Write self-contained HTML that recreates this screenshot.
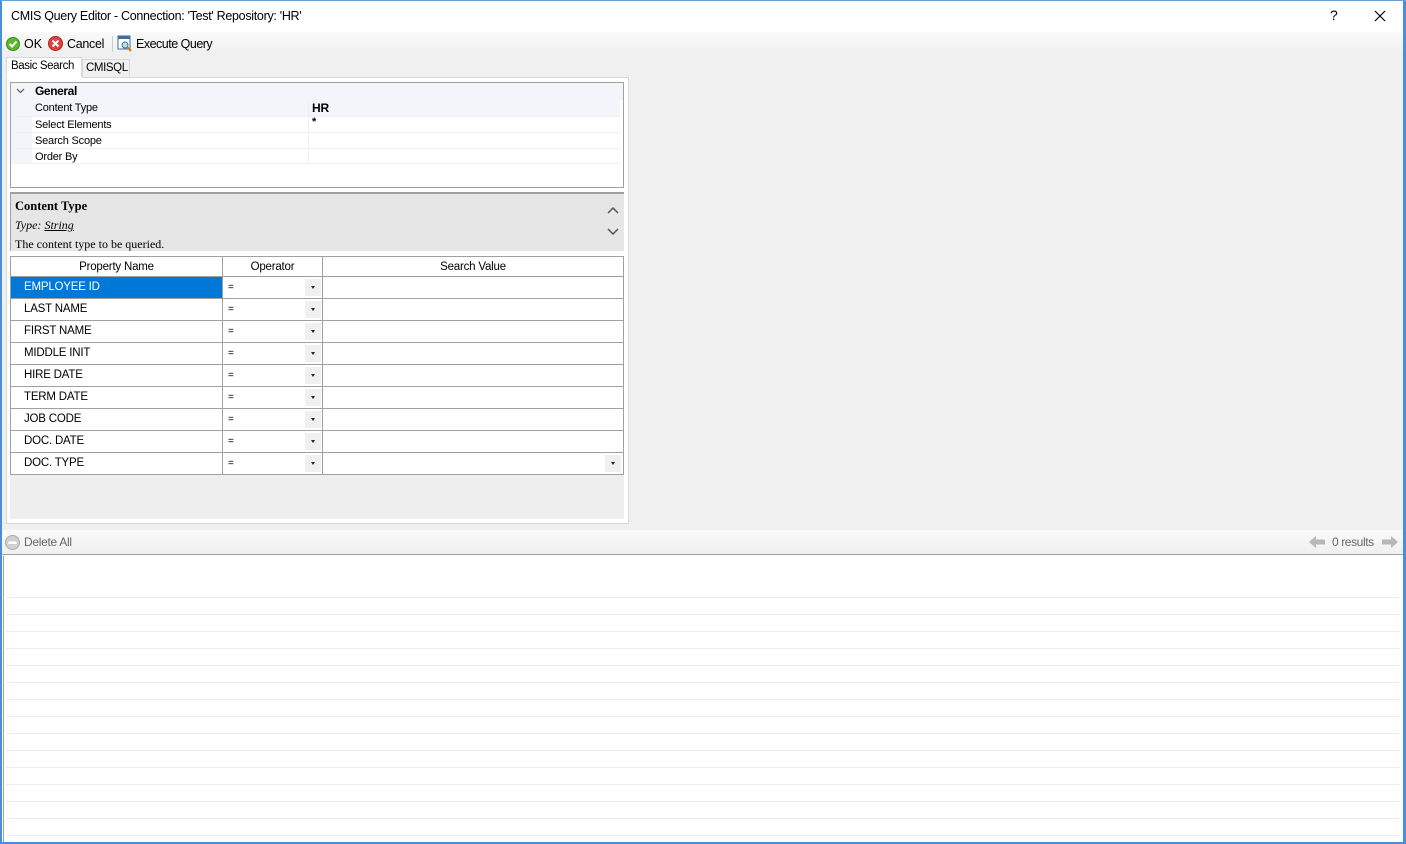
<!DOCTYPE html>
<html><head><style>
*{box-sizing:border-box;margin:0;padding:0}
body{width:1406px;height:844px;overflow:hidden;background:#fff;font-family:"Liberation Sans",sans-serif;font-size:12px;color:#000;position:relative}
.a{position:absolute}
.row{position:absolute;left:11px;width:613px;height:22px;border-bottom:1px solid #a0a0a0;font-size:11.5px;letter-spacing:-0.2px}
.row div{position:absolute;top:0;height:21px;line-height:21px}
.c1{left:0;width:212px;padding-left:13px;border-right:1px solid #a0a0a0}
.c2{left:212px;width:100px;padding-left:5px;border-right:1px solid #a0a0a0;font-size:10px}
.dd{position:absolute;width:16px;height:17px!important;top:2px!important;background:#f0f0f0}
.dd:after{content:"";position:absolute;left:6px;top:7px;border-left:2.5px solid transparent;border-right:2.5px solid transparent;border-top:3px solid #222}
.pg{position:absolute;left:14px;width:606px;height:16px;line-height:16px;font-size:11px;letter-spacing:-0.2px}
.pg span{position:absolute;left:21px}
.hl{position:absolute;left:6px;width:1394px;height:1px;background:#ececec}
</style></head><body>
<div class="a" style="left:0;top:0;width:2px;height:844px;background:#4a8fd6"></div>
<div class="a" style="left:1403px;top:0;width:3px;height:844px;background:#4a8fd6"></div>
<div class="a" style="left:0;top:842px;width:1406px;height:2px;background:#4a8fd6"></div>
<div class="a" style="left:0;top:0;width:1406px;height:1px;background:#6aa0d8"></div>
<div class="a" style="left:11px;top:9px;font-size:12.5px;letter-spacing:-0.3px">CMIS Query Editor - Connection: 'Test' Repository: 'HR'</div>
<div class="a" style="left:1330px;top:7px;font-size:14px">?</div>
<svg class="a" style="left:1374px;top:10px" width="12" height="12"><path d="M1 1L11 11M11 1L1 11" stroke="#000" stroke-width="1.2"/></svg>
<div class="a" style="left:2px;top:32px;width:1401px;height:24px;background:linear-gradient(#fafafa,#eeeeee)"></div>
<div class="a" style="left:2px;top:55px;width:1401px;height:475px;background:#f0f0f0"></div>
<svg class="a" style="left:6px;top:37px" width="14" height="14"><circle cx="7" cy="7" r="6.5" fill="#5cb82e" stroke="#3a8a1a"/><path d="M3.5 7l2.5 2.5 4.5-5" stroke="#fff" stroke-width="2" fill="none"/></svg>
<div class="a" style="left:24px;top:37px;font-size:12.5px">OK</div>
<svg class="a" style="left:48px;top:36px" width="15" height="15"><circle cx="7.5" cy="7.5" r="7" fill="#e04040" stroke="#b02020"/><path d="M4.5 4.5l6 6M10.5 4.5l-6 6" stroke="#fff" stroke-width="2"/></svg>
<div class="a" style="left:67px;top:37px;font-size:12.5px;letter-spacing:-0.3px">Cancel</div>
<div class="a" style="left:112px;top:36px;width:1px;height:16px;background:#ccc"></div>
<svg class="a" style="left:117px;top:35px" width="16" height="17"><rect x="1" y="1" width="12" height="13" fill="#fff" stroke="#3b6ea5"/><rect x="1" y="1" width="12" height="3" fill="#3b6ea5"/><circle cx="8" cy="10" r="3" fill="#bde" stroke="#3b6ea5"/><path d="M10 12l4 4" stroke="#c08020" stroke-width="2"/></svg>
<div class="a" style="left:136px;top:37px;font-size:12.5px;letter-spacing:-0.5px">Execute Query</div>
<div class="a" style="left:6px;top:57px;width:76px;height:21px;background:#fff;border:1px solid #d9d9d9;border-bottom:none"></div>
<div class="a" style="left:11px;top:60px;font-size:11.5px;letter-spacing:-0.4px">Basic Search</div>
<div class="a" style="left:82px;top:59px;width:48px;height:18px;background:#f0f0f0;border:1px solid #d9d9d9;border-bottom:none"></div>
<div class="a" style="left:86px;top:62px;font-size:11.5px;letter-spacing:-0.4px">CMISQL</div>
<div class="a" style="left:6px;top:77px;width:623px;height:447px;background:#fff;border:1px solid #d9d9d9;border-top:none"></div>
<div class="a" style="left:6px;top:77px;width:623px;height:1px;background:#d9d9d9"></div>
<div class="a" style="left:6px;top:77px;width:76px;height:1px;background:#fff"></div>
<div class="a" style="left:10px;top:82px;width:614px;height:106px;border:1px solid #a0a0a0;background:#fff"></div>
<div class="a" style="left:11px;top:83px;width:612px;height:17px;background:#f2f6fb"></div>
<div class="a" style="left:11px;top:83px;width:21px;height:81px;background:#f2f6fb"></div>
<svg class="a" style="left:16px;top:88px" width="9" height="6"><path d="M1 1l3.5 3.5L8 1" stroke="#555" fill="none" stroke-width="1.2"/></svg>
<div class="a" style="left:35px;top:84px;font-weight:bold;font-size:12px;letter-spacing:-0.4px">General</div>
<div class="pg" style="top:100px;background:#f2f6fb"><span>Content Type</span><b style="position:absolute;left:298px;font-size:12px">HR</b></div>
<div class="pg" style="top:116px;border-top:1px solid #f0f0f0"><span>Select Elements</span><b style="position:absolute;left:298px;top:-3px">*</b></div>
<div class="pg" style="top:132px;border-top:1px solid #f0f0f0"><span>Search Scope</span></div>
<div class="pg" style="top:148px;border-top:1px solid #f0f0f0;border-bottom:1px solid #f0f0f0"><span>Order By</span></div>
<div class="a" style="left:308px;top:100px;width:1px;height:64px;background:#f0f0f0"></div>
<div class="a" style="left:10px;top:192px;width:614px;height:59px;background:#e6e6e6;border-top:2px solid #a0a0a0;border-left:1px solid #a0a0a0"></div>
<div class="a" style="left:15px;top:199px;font-family:'Liberation Serif',serif;font-weight:bold;font-size:12.5px">Content Type</div>
<div class="a" style="left:15px;top:218px;font-family:'Liberation Serif',serif;font-style:italic;font-size:12px">Type: <u>String</u></div>
<div class="a" style="left:15px;top:237px;font-family:'Liberation Serif',serif;font-size:12px">The content type to be queried.</div>
<svg class="a" style="left:606px;top:204px" width="14" height="34"><path d="M2 9l5-5 5 5M2 25l5 5 5-5" stroke="#555" stroke-width="1.5" fill="none"/></svg>
<div class="a" style="left:10px;top:256px;width:614px;height:263px;background:#eeeeee"></div>
<div class="a" style="left:10px;top:256px;width:614px;height:219px;border:1px solid #a0a0a0;background:#fff"></div>
<div class="row" style="top:257px;height:20px;text-align:center"><div style="left:0;width:212px;border-right:1px solid #a0a0a0;line-height:20px">Property Name</div><div style="left:212px;width:100px;border-right:1px solid #a0a0a0;line-height:20px">Operator</div><div style="left:312px;width:300px;line-height:20px">Search Value</div></div>
<div class="row" style="top:277px"><div class="c1" style="background:#0078d7;color:#fff">EMPLOYEE ID</div><div class="c2">=</div><div class="dd" style="left:294px"></div></div>
<div class="row" style="top:299px"><div class="c1">LAST NAME</div><div class="c2">=</div><div class="dd" style="left:294px"></div></div>
<div class="row" style="top:321px"><div class="c1">FIRST NAME</div><div class="c2">=</div><div class="dd" style="left:294px"></div></div>
<div class="row" style="top:343px"><div class="c1">MIDDLE INIT</div><div class="c2">=</div><div class="dd" style="left:294px"></div></div>
<div class="row" style="top:365px"><div class="c1">HIRE DATE</div><div class="c2">=</div><div class="dd" style="left:294px"></div></div>
<div class="row" style="top:387px"><div class="c1">TERM DATE</div><div class="c2">=</div><div class="dd" style="left:294px"></div></div>
<div class="row" style="top:409px"><div class="c1">JOB CODE</div><div class="c2">=</div><div class="dd" style="left:294px"></div></div>
<div class="row" style="top:431px"><div class="c1">DOC. DATE</div><div class="c2">=</div><div class="dd" style="left:294px"></div></div>
<div class="row" style="top:453px;border-bottom:none"><div class="c1">DOC. TYPE</div><div class="c2">=</div><div class="dd" style="left:294px"></div><div class="dd" style="left:594px"></div></div>
<div class="a" style="left:2px;top:530px;width:1401px;height:25px;background:linear-gradient(#fafafa,#f0f0f0);border-bottom:1px solid #a0a0a0"></div>
<svg class="a" style="left:5px;top:535px" width="15" height="15"><circle cx="7.5" cy="7.5" r="7" fill="#d0d0d0" stroke="#aaa"/><rect x="3.5" y="6.5" width="8" height="2.5" fill="#fff"/></svg>
<div class="a" style="left:24px;top:535px;color:#666;font-size:12px;letter-spacing:-0.3px">Delete All</div>
<svg class="a" style="left:1308px;top:535px" width="18" height="14"><path d="M1 7l7-6v3.5h9v5H8V13z" fill="#b8b8b8"/></svg>
<div class="a" style="left:1332px;top:535px;color:#666;font-size:12px;letter-spacing:-0.4px">0 results</div>
<svg class="a" style="left:1381px;top:535px" width="18" height="14"><path d="M17 7l-7-6v3.5H1v5h9V13z" fill="#b8b8b8"/></svg>
<div class="a" style="left:3px;top:556px;width:1px;height:286px;background:#a0a0a0"></div>
<div class="hl" style="top:597px"></div><div class="hl" style="top:614px"></div><div class="hl" style="top:631px"></div><div class="hl" style="top:648px"></div><div class="hl" style="top:665px"></div><div class="hl" style="top:682px"></div><div class="hl" style="top:699px"></div><div class="hl" style="top:716px"></div><div class="hl" style="top:733px"></div><div class="hl" style="top:750px"></div><div class="hl" style="top:767px"></div><div class="hl" style="top:784px"></div><div class="hl" style="top:801px"></div><div class="hl" style="top:818px"></div><div class="hl" style="top:835px"></div>
</body></html>
